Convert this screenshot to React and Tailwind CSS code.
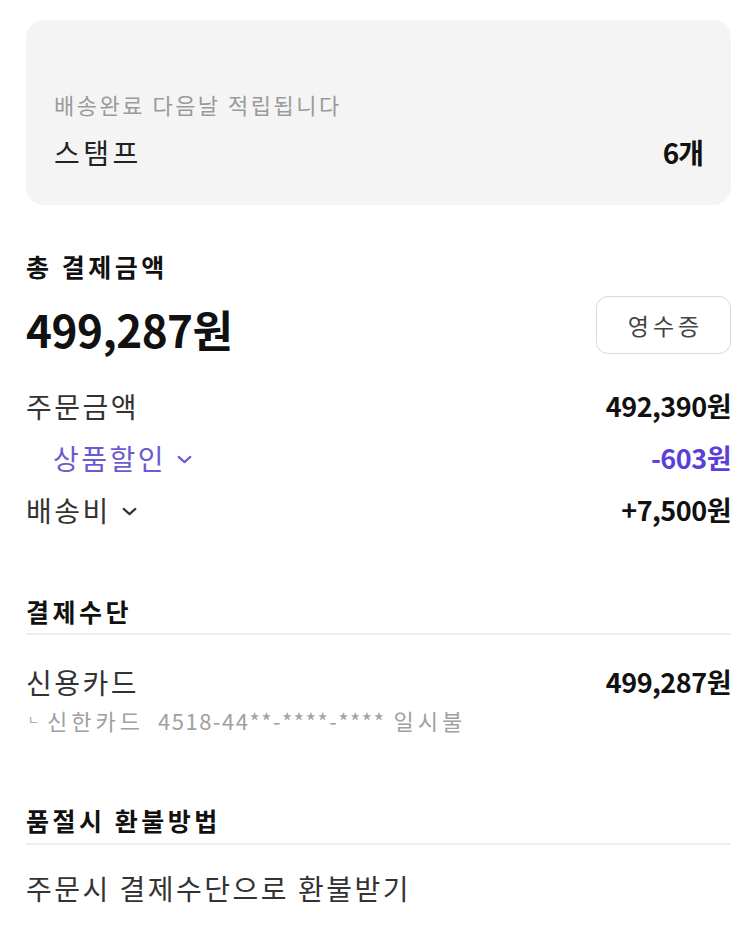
const font = { fontFamily: '"Noto Sans CJK KR", "Noto Sans", sans-serif' }

const Chevron = ({ className }) => (
  <svg viewBox="0 0 16 16" className={className} fill="none" stroke="currentColor" strokeWidth="2" strokeLinecap="round" strokeLinejoin="round">
    <path d="M2.5 5.5l5.5 5 5.5-5" />
  </svg>
)

const Row = ({ label, value, labelClass = 'text-[#333]', valueClass = 'text-[#111]', chevron }) => (
  <div className="flex items-center justify-between h-[52px]">
    <div className={`flex items-center gap-[10px] text-[28px] tracking-[2.5px] ${labelClass}`}>
      {label}
      {chevron && <Chevron className="w-[17px] h-[17px] mt-[2px]" />}
    </div>
    <div className={`text-[27px] font-bold tracking-[-0.5px] ${valueClass}`}>{value}</div>
  </div>
)

export default function App() {
  return (
    <div className="bg-white w-[750px] min-h-[929px] pl-[26px] pr-[19px] pt-[20px] pb-10" style={font}>
      {/* 스탬프 카드 */}
      <div className="bg-[#f4f4f4] rounded-[18px] pl-[28px] pr-[28px] pt-[69px] pb-[35px]">
        <p className="text-[22px] tracking-[2.5px] text-[#9a9a9a] leading-[30px]">배송완료 다음날 적립됩니다</p>
        <div className="flex items-center justify-between mt-[15px]">
          <span className="text-[28px] tracking-[3.5px] text-[#222] leading-[36px]">스탬프</span>
          <span className="text-[28px] font-bold text-[#111] tracking-[-1px] leading-[36px]">6개</span>
        </div>
      </div>

      {/* 총 결제금액 */}
      <div className="mt-[45px]">
        <p className="text-[25px] font-bold text-[#111] tracking-[3.5px] leading-[32px]">총 결제금액</p>
        <div className="flex items-start justify-between mt-[14px]">
          <span className="text-[44px] font-bold text-[#111] tracking-[-0.5px] leading-[66px]">499,287원</span>
          <button className="w-[135px] h-[58px] border border-[#d9d9d9] rounded-[12px] text-[23px] tracking-[4px] pl-[4px] text-[#444] bg-white">
            영수증
          </button>
        </div>
      </div>

      <div className="mt-[18px]">
        <Row label="주문금액" value="492,390원" />
        <div className="pl-[27px]">
          <Row label="상품할인" value="-603원" labelClass="text-[#6b5bd0]" valueClass="text-[#5a3fd8]" chevron />
        </div>
        <Row label="배송비" value="+7,500원" chevron />
      </div>

      {/* 결제수단 */}
      <div className="mt-[59px]">
        <p className="text-[25px] font-bold text-[#111] tracking-[3.5px] leading-[32px] pb-[6px] border-b-2 border-[#eeeeee]">결제수단</p>
        <div className="flex items-center justify-between mt-[29px]">
          <span className="text-[28px] tracking-[2.5px] text-[#333] leading-[36px]">신용카드</span>
          <span className="text-[27px] font-bold text-[#111] tracking-[-0.5px] leading-[36px]">499,287원</span>
        </div>
        <p className="text-[22px] text-[#a0a0a0] leading-[34px] mt-[3px]">
          <span className="text-[12px] align-top pl-[2px] pr-[8px]">ㄴ</span>
          <span className="tracking-[4px]">신한카드</span>
          <span className="pl-[14px] tracking-[1.5px]">4518-44**-****-****</span>
          <span className="pl-[8px] tracking-[4px]">일시불</span>
        </p>
      </div>

      {/* 품절시 환불방법 */}
      <div className="mt-[67px]">
        <p className="text-[25px] font-bold text-[#111] tracking-[3.5px] leading-[32px] pb-[7px] border-b-2 border-[#eeeeee]">품절시 환불방법</p>
        <p className="text-[28px] tracking-[2.5px] text-[#333] leading-[36px] mt-[25px]">주문시 결제수단으로 환불받기</p>
      </div>
    </div>
  )
}
